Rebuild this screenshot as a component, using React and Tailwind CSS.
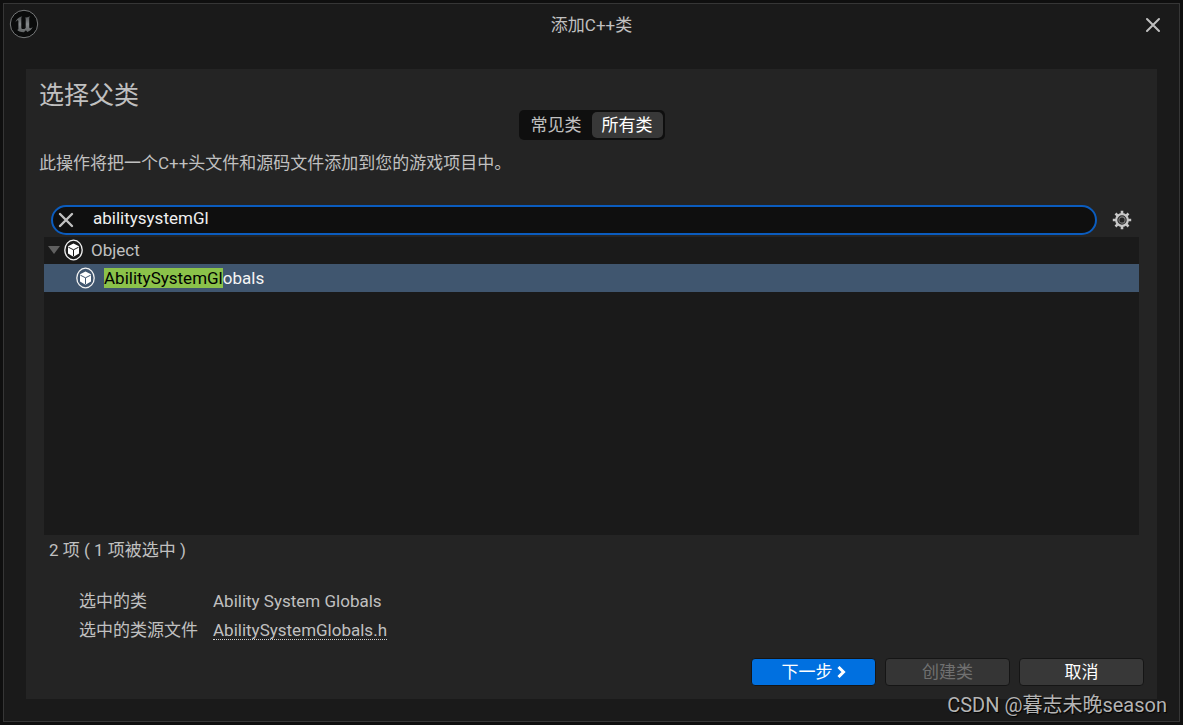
import { useState } from 'react'

const fontFamily = "font-['Roboto','Noto_Sans_CJK_SC',sans-serif]"

const UnrealLogo = () => (
  <svg className="w-[30px] h-[30px]" viewBox="0 0 30 30" aria-hidden="true">
    <defs>
      <linearGradient id="logoFill" x1="0" y1="0" x2="0" y2="1">
        <stop offset="0" stopColor="#505355" />
        <stop offset="0.5" stopColor="#85898b" />
        <stop offset="1" stopColor="#606364" />
      </linearGradient>
    </defs>
    <circle cx="15" cy="15" r="13.7" fill="#0a0b0b" stroke="#77797a" strokeWidth="1" />
    <path
      d="M6.4 13.2C7.6 9.8 10 7.9 13.3 7.3C12.6 7.9 12.3 8.5 12.3 9.4V18.4C12.3 19.6 13 20.1 13.9 20.1C14.9 20.1 15.9 19.7 16.7 18.9V9.9C16.7 9.3 16.4 8.9 15.7 8.8C17.3 8.5 19.3 8 21.6 7C20.6 7.8 20.2 8.5 20.2 9.5V18C20.2 19 20.7 19.4 21.4 19.3C22.1 19.2 22.8 18.7 23.6 17.7C22.9 20.2 20.9 22 18.4 22.9L16.9 21.3L14.9 23.3C11.3 23.2 8.9 22.2 8.1 20.8C9 20.9 9.4 20.6 9.4 19.7V12.3C9.4 11.3 8.8 11 8.1 11.4C7.5 11.8 7 12.4 6.4 13.2Z"
      fill="url(#logoFill)"
    />
  </svg>
)

const ObjectIcon = ({ cut }) => (
  <svg className="w-5 h-[22px] shrink-0" viewBox="0 0 20 22" aria-hidden="true">
    <ellipse cx="9.5" cy="11" rx="8.7" ry="9.8" fill="none" stroke="#f2f2f2" strokeWidth="1.3" />
    <path d="M9.5 4.6L15 7.3V14.6L9.5 17.8L4 14.6V7.3Z" fill="#fff" />
    <path d="M4.4 8.2L9.5 10.8L14.6 8.2M9.5 10.8V17.2" fill="none" stroke={cut} strokeWidth="1" />
  </svg>
)

const CrossIcon = ({ className }) => (
  <svg className={className} viewBox="0 0 16 16" fill="none" stroke="#c0c0c0" strokeLinecap="round" aria-hidden="true">
    <path d="M2 2L14 14M14 2L2 14" />
  </svg>
)

const GearIcon = () => (
  <svg className="w-5 h-5" viewBox="0 0 20 20" fill="none" stroke="#c8c8c8" aria-hidden="true">
    <circle cx="10" cy="10" r="5.8" strokeWidth="2.2" />
    <circle cx="10" cy="10" r="3.1" stroke="#808080" strokeWidth="1.1" />
    <path
      d="M10 0.8V4M10 16V19.2M0.8 10H4M16 10H19.2M3.5 3.5L5.6 5.6M14.4 14.4L16.5 16.5M16.5 3.5L14.4 5.6M5.6 14.4L3.5 16.5"
      strokeWidth="2.6"
    />
  </svg>
)

const tabs = [
  { id: 'common', label: '常见类' },
  { id: 'all', label: '所有类' },
]

const footerButton = 'w-[125px] h-7 rounded border border-[#151515] flex items-center justify-center gap-1'

export default function App() {
  const [tab, setTab] = useState('all')
  const [query, setQuery] = useState('abilitysystemGl')

  return (
    <div className={`min-h-screen flex flex-col bg-[#0f0f0f] p-[3px] text-[17px] leading-6 text-[#c0c0c0] ${fontFamily}`}>
      <div className="relative flex-1 flex flex-col border border-[#363636] bg-[#1a1a1a] px-[22px] pb-[22px]">
        {/* Title bar */}
        <header className="-mx-[22px] h-[65px] grid grid-cols-[1fr_auto_1fr] items-start px-[5px] pt-[5px]">
          <UnrealLogo />
          <h1 className="pt-1">添加C++类</h1>
          <button aria-label="关闭" className="justify-self-end p-2 mr-[5px]">
            <CrossIcon className="w-4 h-4 stroke-2" />
          </button>
        </header>

        <main className="flex-1 flex flex-col bg-[#242424] px-[13px] pb-[13px]">
          <h2 className="pt-[11px] h-[41px] text-[25px] leading-8">选择父类</h2>

          <div role="tablist" className="self-center flex rounded-[5px] bg-[#0f0f0f] p-0.5 h-[30px]">
            {tabs.map(({ id, label }) => (
              <button
                key={id}
                role="tab"
                aria-selected={tab === id}
                onClick={() => setTab(id)}
                className={`w-[71px] rounded-[5px] leading-6 ${tab === id ? 'bg-[#383838] text-white' : ''}`}
              >
                {label}
              </button>
            ))}
          </div>

          <p className="mt-[11px]">此操作将把一个C++头文件和源码文件添加到您的游戏项目中。</p>

          {/* Search */}
          <div className="mt-[30px] ml-3 mr-[9px] flex items-center justify-between gap-[13px]">
            <div className="flex-1 h-[30px] flex items-center rounded-full border-2 border-[#0b5cbe] bg-[#0f0f0f] pl-[3px]">
              <button aria-label="清除" onClick={() => setQuery('')} className="p-0.5">
                <CrossIcon className="w-4 h-4 stroke-[2.4]" />
              </button>
              <input
                aria-label="搜索"
                value={query}
                onChange={(e) => setQuery(e.target.value)}
                className="flex-1 h-6 mb-1 pl-[17px] pr-4 bg-transparent text-[#f0f0f0] outline-none"
              />
            </div>
            <button aria-label="设置" className="w-6 h-6 mr-px flex items-center justify-center">
              <GearIcon />
            </button>
          </div>

          {/* Class tree */}
          <ul role="tree" className="mt-0.5 ml-[5px] mr-[5px] flex-1 min-h-[200px] bg-[#1a1a1a]">
            <li role="treeitem" aria-expanded="true" className="h-[27px] flex items-center pl-1 pb-px">
              <svg className="w-3 h-2 mr-1" viewBox="0 0 12 8" aria-hidden="true">
                <path d="M0 0H12L6 8Z" fill="#606060" />
              </svg>
              <ObjectIcon cut="#1a1a1a" />
              <span className="ml-[7px]">Object</span>
            </li>
            <li role="treeitem" aria-selected="true" className="h-7 flex items-center pl-8 bg-[#40566f] text-[#f4f4f4]">
              <ObjectIcon cut="#40566f" />
              <span className="ml-2 leading-5">
                <mark className="inline-block bg-[#8bc24a] text-black">AbilitySystemGl</mark>obals
              </span>
            </li>
          </ul>
          <p className="mt-[3px] ml-2.5">2 项 ( 1 项被选中 )</p>

          <dl className="mt-[27px] ml-10 grid grid-cols-[134px_1fr] gap-y-[5px]">
            <dt>选中的类</dt>
            <dd>Ability System Globals</dd>
            <dt>选中的类源文件</dt>
            <dd>
              <a href="#source" className="inline-block h-[22px] border-b border-dotted border-[#d0d0d0]">AbilitySystemGlobals.h</a>
            </dd>
          </dl>

          <footer className="mt-4 flex justify-end gap-[9px]">
            <button className={`${footerButton} bg-[#0070e0] text-white`}>
              下一步
              <svg className="w-[9px] h-3" viewBox="0 0 9 12" fill="none" stroke="#fff" strokeWidth="3" aria-hidden="true">
                <path d="M1.5 1L6.5 6L1.5 11" />
              </svg>
            </button>
            <button disabled className={`${footerButton} bg-[#353535] text-[#707070]`}>创建类</button>
            <button className={`${footerButton} bg-[#383838] text-white`}>取消</button>
          </footer>
        </main>

        <span className="absolute right-3 bottom-1 text-xl leading-6 text-[#b4b4b4] [text-shadow:1px_1px_1px_#000]">
          CSDN @暮志未晚season
        </span>
      </div>
    </div>
  )
}
